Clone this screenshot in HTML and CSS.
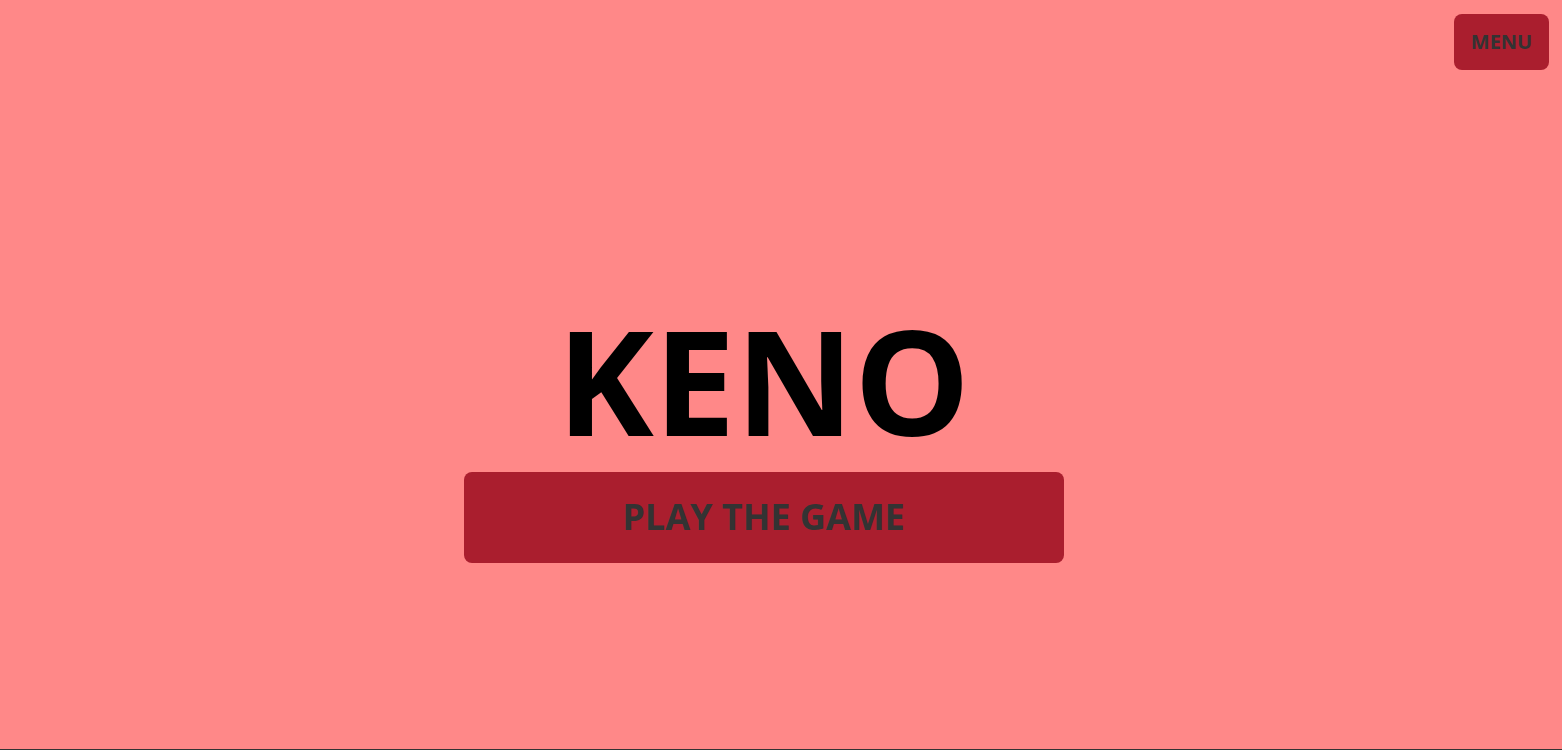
FILE: index.html
```html
<!DOCTYPE html>
<html>
<head>
<meta charset="utf-8">
<link rel="stylesheet" href="styles.css">
</head>
<body>
<div class="page">
  <header class="topbar">
    <button class="menu-btn">MENU</button>
  </header>
  <main class="hero">
    <h1 class="title">KENO</h1>
    <button class="play-btn">PLAY THE GAME</button>
  </main>
</div>
</body>
</html>
```
FILE: styles.css
```css
html, body {
  margin: 0;
  padding: 0;
  background: #ff8888;
}
body {
  font-family: "Open Sans", "Noto Sans", sans-serif;
}
.page {
  height: 749px;
  border-bottom: 1px solid #333;
  display: flex;
  flex-direction: column;
  overflow: hidden;
}
.topbar {
  display: flex;
  justify-content: flex-end;
  padding: 14px 13px 0 0;
}
.menu-btn {
  width: 95px;
  height: 56px;
  background: #aa1e2e;
  border: none;
  border-radius: 8px;
  color: #333;
  font-family: inherit;
  font-weight: 700;
  font-size: 20px;
  padding: 0 0 1px;
}
.hero {
  display: flex;
  flex-direction: column;
  align-items: center;
  padding: 237px 35px 0 0;
}
.title {
  margin: 0;
  font-size: 146px;
  line-height: 146px;
  font-weight: 700;
  color: #000;
}
.play-btn {
  margin-top: 19px;
  width: 600px;
  height: 91px;
  background: #aa1e2e;
  border: none;
  border-radius: 8px;
  color: #333;
  font-family: inherit;
  font-weight: 700;
  font-size: 36px;
  padding: 0 0 3px;
}
```
